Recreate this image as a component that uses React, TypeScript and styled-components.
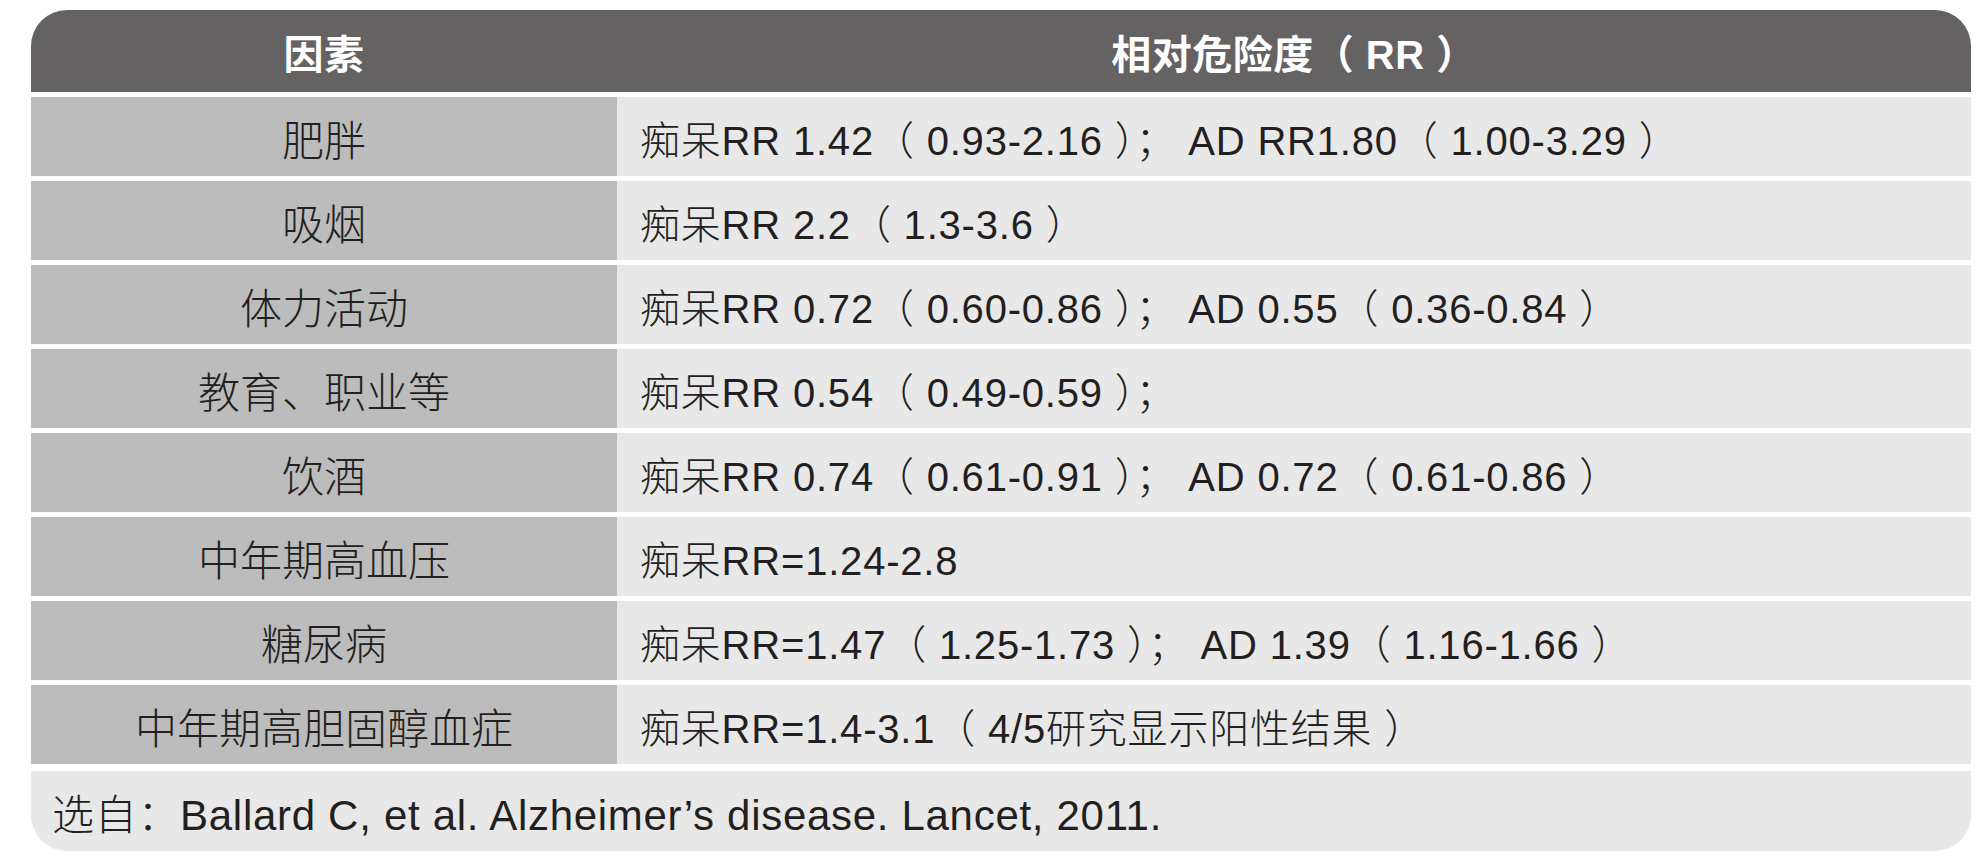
import React from 'react';
import styled, { createGlobalStyle } from 'styled-components';

const GlobalStyle = createGlobalStyle`
  html, body {
    margin: 0;
    padding: 0;
    background: #ffffff;
  }
  body {
    font-family: "Liberation Sans", "Noto Sans CJK SC", sans-serif;
    color: #231f20;
  }
`;

const rows = [
  { factor: '肥胖', rr: '痴呆RR 1.42（ 0.93-2.16 ）； AD RR1.80（ 1.00-3.29 ）' },
  { factor: '吸烟', rr: '痴呆RR 2.2（ 1.3-3.6 ）' },
  { factor: '体力活动', rr: '痴呆RR 0.72（ 0.60-0.86 ）； AD 0.55（ 0.36-0.84 ）' },
  { factor: '教育、职业等', rr: '痴呆RR 0.54（ 0.49-0.59 ）；' },
  { factor: '饮酒', rr: '痴呆RR 0.74（ 0.61-0.91 ）； AD 0.72（ 0.61-0.86 ）' },
  { factor: '中年期高血压', rr: '痴呆RR=1.24-2.8' },
  { factor: '糖尿病', rr: '痴呆RR=1.47（ 1.25-1.73 ）； AD 1.39（ 1.16-1.66 ）' },
  { factor: '中年期高胆固醇血症', rr: '痴呆RR=1.4-3.1（ 4/5研究显示阳性结果 ）' },
];

const App = () => {
  return (
    <>
      <GlobalStyle />
      <Page>
        <Table>
          <HeaderRow>
            <HeaderCell>因素</HeaderCell>
            <HeaderCell>相对危险度（ RR ）</HeaderCell>
          </HeaderRow>
          {rows.map((r) => (
            <Row key={r.factor}>
              <FactorCell>{r.factor}</FactorCell>
              <ValueCell>{r.rr}</ValueCell>
            </Row>
          ))}
          <Footer>选自：Ballard C, et al. Alzheimer’s disease. Lancet, 2011.</Footer>
        </Table>
      </Page>
    </>
  );
};

export default App;

const Page = styled.div`
  width: 1984px;
  height: 858px;
  padding: 10px 13px 0 31px;
  box-sizing: border-box;
`;

const Table = styled.div`
  display: flex;
  flex-direction: column;
  gap: 5px;
`;

const HeaderRow = styled.div`
  display: grid;
  grid-template-columns: 586px 1fr;
  height: 82px;
  background: #646263;
  border-radius: 36px 36px 0 0;
`;

const HeaderCell = styled.div`
  display: flex;
  align-items: center;
  justify-content: center;
  color: #ffffff;
  font-weight: 700;
  font-size: 40px;
  letter-spacing: 0.5px;
  padding-top: 2px;
  white-space: pre;
`;

const Row = styled.div`
  display: grid;
  grid-template-columns: 586px 1fr;
  height: 79px;
`;

const FactorCell = styled.div`
  display: flex;
  align-items: center;
  justify-content: center;
  background: #bcbcbc;
  font-size: 42px;
  font-weight: 300;
  padding-top: 2px;
`;

const ValueCell = styled.div`
  display: flex;
  align-items: center;
  background: #e8e8e8;
  padding: 3px 0 0 23px;
  font-size: 40px;
  font-weight: 300;
  letter-spacing: 0.8px;
  white-space: pre;
`;

const Footer = styled.div`
  display: flex;
  align-items: center;
  height: 80px;
  margin-top: 2px;
  padding: 0 0 0 21px;
  background: #e8e8e8;
  border-radius: 0 0 36px 36px;
  font-size: 42px;
  font-weight: 300;
  letter-spacing: 0.7px;
  white-space: pre;
`;
